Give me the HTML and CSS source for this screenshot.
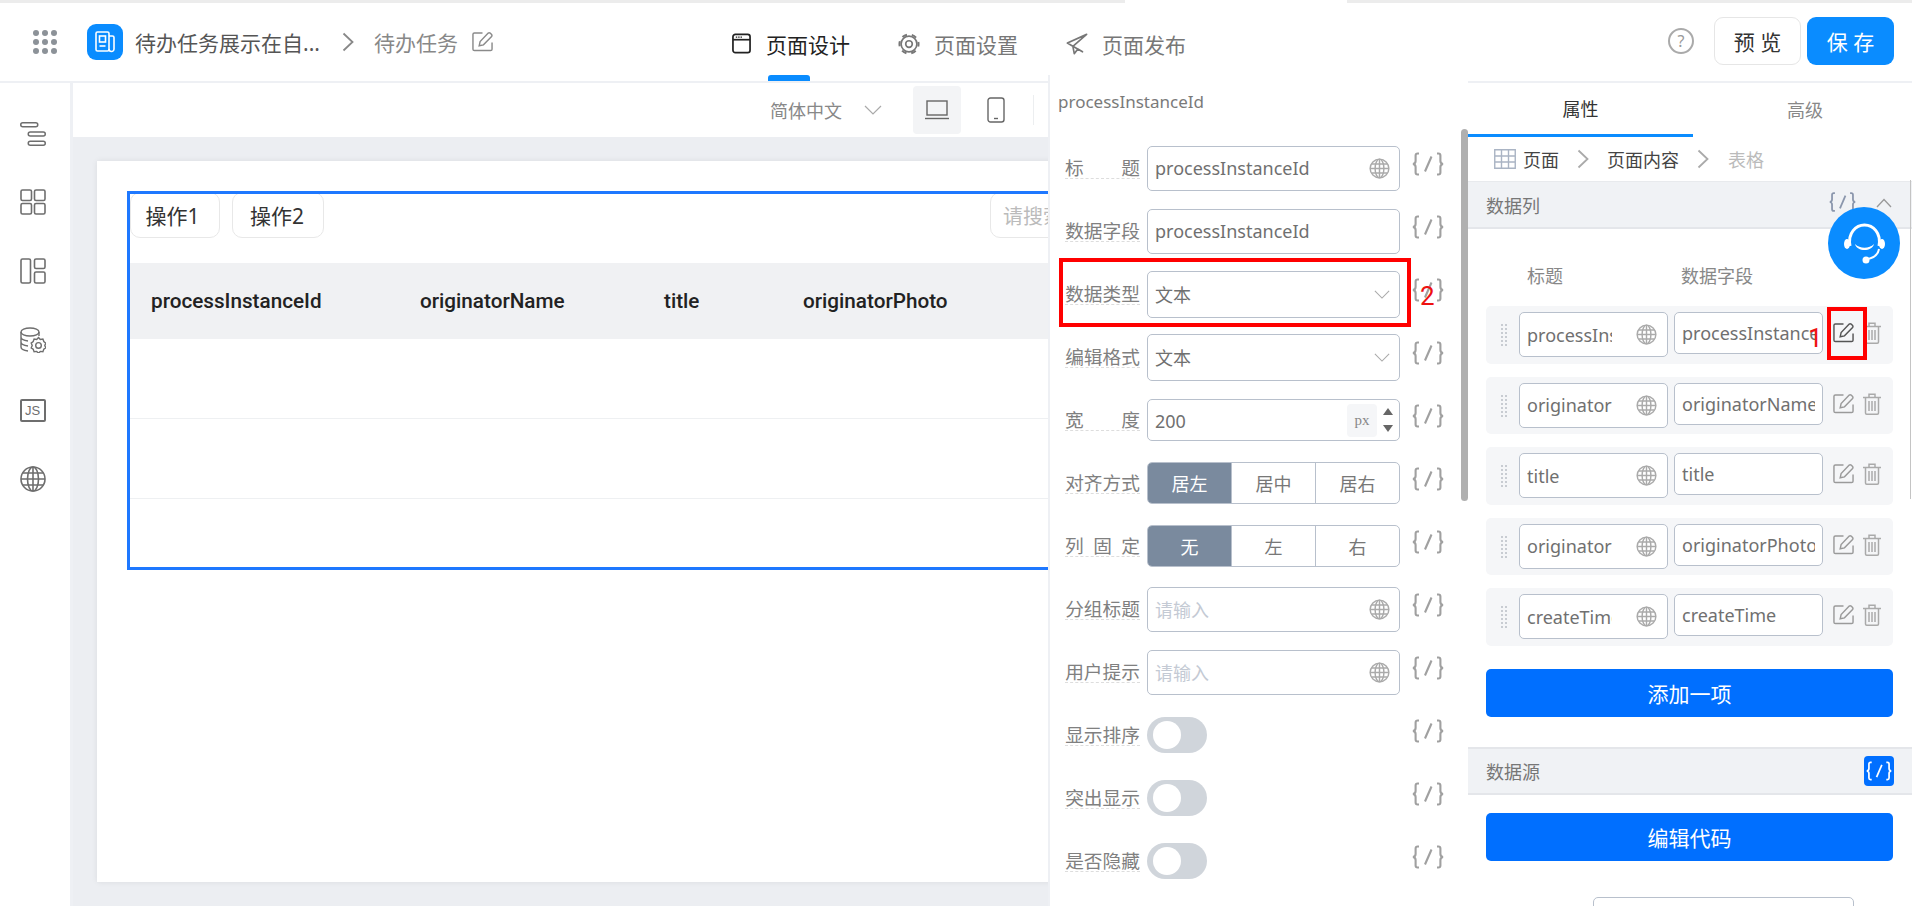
FILE: index.html
```html
<!DOCTYPE html>
<html lang="zh-CN">
<head>
<meta charset="utf-8">
<title>页面设计</title>
<link rel="stylesheet" href="styles.css">
</head>
<body>
<svg class="defs" aria-hidden="true">
  <symbol id="i-globe" viewBox="0 0 22 22"><g fill="none" stroke="currentColor" stroke-width="1.5"><circle cx="11" cy="11" r="9.8"/><ellipse cx="11" cy="11" rx="4.6" ry="9.8"/><path d="M11 1.2v19.6M1.2 11h19.6M2.6 6.2h16.8M2.6 15.8h16.8"/></g></symbol>
  <symbol id="i-fx" viewBox="0 0 32 24"><g fill="none" stroke="currentColor" stroke-width="2.1"><path d="M7 1.500H5.600Q3.600 1.500 3.600 3.500V9Q3.600 11.500 1 12Q3.600 12.500 3.600 15V20.500Q3.600 22.500 5.600 22.500H7"/><path d="M25 1.500H26.400Q28.400 1.500 28.400 3.500V9Q28.400 11.500 31 12Q28.400 12.500 28.400 15V20.500Q28.400 22.500 26.400 22.500H25"/><path d="M19.500 4.500L13 19.500"/></g></symbol>
  <symbol id="i-down" viewBox="0 0 18 10"><path d="M1 1l8 8 8-8" fill="none" stroke="currentColor" stroke-width="1.2"/></symbol>
  <symbol id="i-right" viewBox="0 0 12 20"><path d="M1.500 1.500L10.500 10L1.500 18.500" fill="none" stroke="currentColor" stroke-width="1.800"/></symbol>
  <symbol id="i-edit" viewBox="0 0 22 22"><g fill="none" stroke="currentColor" stroke-width="1.500"><path d="M11 2H2.500Q1 2 1 3.500V19Q1 20.500 2.500 20.500H19.500Q21 20.500 21 19V12"/><path d="M7.500 15.500L8.500 11L17 2.200Q18 1.300 19 2.200L20.500 3.700Q21.300 4.700 20.500 5.700L12 14.500Z"/></g></symbol>
  <symbol id="i-trash" viewBox="0 0 18 22"><g fill="none" stroke="currentColor" stroke-width="1.500"><path d="M0 4.500h18M6 4V1.200h6V4M2.500 4.500V20a1.200 1.200 0 0 0 1.200 1.200h10.600A1.200 1.200 0 0 0 15.500 20V4.500M6 8v10M9 8v10M12 8v10"/></g></symbol>
</svg>

<div class="strip"><span class="strip-a"></span><span class="strip-b"></span><span class="strip-c"></span></div>

<header class="topbar">
  <div class="dots"><i></i><i></i><i></i><i></i><i></i><i></i><i></i><i></i><i></i></div>
  <div class="applogo">
    <svg viewBox="0 0 24 24" width="24" height="24"><g fill="none" stroke="#fff" stroke-width="1.600"><rect x="3" y="2" width="13" height="19" rx="1.500"/><path d="M16 6h3.500a1.500 1.500 0 0 1 1.500 1.500V19a2.500 2.500 0 0 1-5 0"/><rect x="6.500" y="6" width="6" height="6"/><path d="M6.500 16h6"/></g></svg>
  </div>
  <span class="appname">待办任务展示在自...</span>
  <svg class="crumb-chev"><use href="#i-right"/></svg>
  <span class="pagename">待办任务</span>
  <svg class="page-edit"><use href="#i-edit"/></svg>

  <nav class="maintabs">
    <div class="maintab is-active">
      <svg viewBox="0 0 20 22" width="19" height="21"><rect x="1" y="1.500" width="18" height="19" rx="2.500" fill="none" stroke="#222" stroke-width="1.800"/><path d="M1 7h18" stroke="#222" stroke-width="1.800"/><path d="M4 4.300h7" stroke="#222" stroke-width="1.200" stroke-dasharray="1.500 1"/></svg>
      <span>页面设计</span>
    </div>
    <div class="maintab">
      <svg viewBox="0 0 24 24" width="22" height="22"><g fill="none" stroke="#777"><circle cx="12" cy="12" r="8.600" stroke-width="1.800"/><circle cx="12" cy="12" r="10.400" stroke-width="2.200" stroke-dasharray="5.500 5.400" stroke-dashoffset="2.700"/><circle cx="12" cy="12" r="3.600" stroke-width="1.800"/></g></svg>
      <span>页面设置</span>
    </div>
    <div class="maintab">
      <svg viewBox="0 0 24 24" width="22" height="22"><path d="M22.500 1.500L1.500 11l6 3.500L22.500 1.500zM7.500 14.500L9 22.500l4-5 5 3z" fill="none" stroke="#777" stroke-width="1.800" stroke-linejoin="round"/></svg>
      <span>页面发布</span>
    </div>
  </nav>

  <div class="topright">
    <span class="help">?</span>
    <span class="btn-preview">预 览</span>
    <span class="btn-save">保 存</span>
  </div>
</header>

<main class="workspace">
  <aside class="rail">
    <svg viewBox="0 0 26 24" width="26" height="24"><g fill="none" stroke="#6e6e6e" stroke-width="1.500"><rect x=".75" y=".75" width="17" height="4" rx="2"/><rect x="8.250" y="10" width="17" height="4" rx="2"/><rect x="8.250" y="19.250" width="17" height="4" rx="2"/></g></svg>
    <svg viewBox="0 0 26 26" width="26" height="26"><g fill="none" stroke="#6e6e6e" stroke-width="1.600"><rect x="1" y="1" width="10.500" height="10.500" rx="1.500"/><rect x="14.500" y="1" width="10.500" height="10.500" rx="1.500"/><rect x="1" y="14.500" width="10.500" height="10.500" rx="1.500"/><rect x="14.500" y="14.500" width="10.500" height="10.500" rx="1.500"/></g></svg>
    <svg viewBox="0 0 26 26" width="26" height="26"><g fill="none" stroke="#6e6e6e" stroke-width="1.600"><rect x="1" y="1" width="9.500" height="24" rx="1.500"/><rect x="14.500" y="1" width="10.500" height="9.500" rx="1.500"/><rect x="14.500" y="14" width="10.500" height="11" rx="1.500"/></g></svg>
    <svg viewBox="0 0 26 26" width="26" height="26"><g fill="none" stroke="#6e6e6e" stroke-width="1.400"><ellipse cx="10" cy="5" rx="9" ry="4"/><path d="M1 5v15c0 2 3 3.500 7 4M1 10c0 2 3 3.500 7 4M1 15c0 2 3 3.500 7 4M19 5v4"/><path d="M18.500 10.500l1.800 2 2.600-.4.900 2.500 2 1.500-1 2.400 1 2.400-2 1.400-.9 2.400-2.600-.3-1.800 1.800-1.800-1.800-2.600.3-.9-2.400-2-1.400 1-2.400-1-2.400 2-1.500.9-2.500 2.600.4z"/><circle cx="18.500" cy="18.400" r="2.800"/></g></svg>
    <div class="rail-js">JS</div>
    <svg class="rail-globe" viewBox="0 0 26 26" width="26" height="26"><g fill="none" stroke="#6e6e6e" stroke-width="1.600"><circle cx="13" cy="13" r="12"/><ellipse cx="13" cy="13" rx="5.500" ry="12"/><path d="M13 1v24M1 13h24M2.800 7h20.400M2.800 19h20.400"/></g></svg>
  </aside>

  <section class="canvas">
    <div class="canvas-tools">
      <span class="lang">简体中文</span>
      <svg class="lang-chev"><use href="#i-down"/></svg>
      <span class="device is-on"><svg viewBox="0 0 26 20" width="26" height="20"><g fill="none" stroke="#666" stroke-width="1.400"><rect x="3" y="1" width="20" height="14"/><path d="M1 18.500h24"/></g></svg></span>
      <span class="device"><svg viewBox="0 0 18 26" width="18" height="26"><g fill="none" stroke="#666" stroke-width="1.400"><rect x="1" y="1" width="16" height="24" rx="2.500"/><path d="M7 21.500h4"/></g></svg></span>
      <span class="tool-sep"></span>
    </div>
    <div class="page-sheet">
      <div class="tablebox">
        <div class="tablebar">
          <span class="opbtn">操作1</span>
          <span class="opbtn">操作2</span>
          <span class="searchbox">请搜索</span>
        </div>
        <div class="thead">
          <span>processInstanceId</span><span>originatorName</span><span>title</span><span>originatorPhoto</span>
        </div>
        <div class="trow"></div>
        <div class="trow"></div>
      </div>
    </div>
  </section>

  <aside class="props">
    <div class="props-tabs">
      <span class="props-tab is-active">属性</span>
      <span class="props-tab">高级</span>
    </div>
    <div class="props-crumb">
      <svg class="crumb-grid" viewBox="0 0 22 20" width="22" height="20"><path d="M.75.75h20.500v18.500H.75zM.75 7h20.500M.75 13h20.500M7.500.75v18.500M14.500.75v18.500" fill="none" stroke="#aab4c4" stroke-width="1.400"/></svg>
      <span>页面</span>
      <svg class="chev"><use href="#i-right"/></svg>
      <span>页面内容</span>
      <svg class="chev"><use href="#i-right"/></svg>
      <span class="crumb-last">表格</span>
    </div>
    <div class="sect sect-cols">
      <span>数据列</span>
      <svg class="fx fx-blue"><use href="#i-fx"/></svg>
      <svg class="sect-up" viewBox="0 0 16 10" width="16" height="10"><path d="M1 9l7-7.500L15 9" fill="none" stroke="#999" stroke-width="1.300"/></svg>
    </div>
    <div class="cols-head"><span>标题</span><span>数据字段</span></div>
    <div class="cols-list">
      <div class="colrow">
        <span class="grip"></span>
        <div class="cbox cbox-a"><span class="ctext">processInstanceId</span><svg class="globe"><use href="#i-globe"/></svg></div>
        <div class="cbox cbox-b"><span class="ctext">processInstanceId</span></div>
        <svg class="act-edit is-dark"><use href="#i-edit"/></svg>
        <svg class="act-trash"><use href="#i-trash"/></svg>
      </div>
      <div class="colrow">
        <span class="grip"></span>
        <div class="cbox cbox-a"><span class="ctext">originatorName</span><svg class="globe"><use href="#i-globe"/></svg></div>
        <div class="cbox cbox-b"><span class="ctext">originatorName</span></div>
        <svg class="act-edit"><use href="#i-edit"/></svg>
        <svg class="act-trash"><use href="#i-trash"/></svg>
      </div>
      <div class="colrow">
        <span class="grip"></span>
        <div class="cbox cbox-a"><span class="ctext">title</span><svg class="globe"><use href="#i-globe"/></svg></div>
        <div class="cbox cbox-b"><span class="ctext">title</span></div>
        <svg class="act-edit"><use href="#i-edit"/></svg>
        <svg class="act-trash"><use href="#i-trash"/></svg>
      </div>
      <div class="colrow">
        <span class="grip"></span>
        <div class="cbox cbox-a"><span class="ctext">originatorPhoto</span><svg class="globe"><use href="#i-globe"/></svg></div>
        <div class="cbox cbox-b"><span class="ctext">originatorPhoto</span></div>
        <svg class="act-edit"><use href="#i-edit"/></svg>
        <svg class="act-trash"><use href="#i-trash"/></svg>
      </div>
      <div class="colrow">
        <span class="grip"></span>
        <div class="cbox cbox-a"><span class="ctext">createTime</span><svg class="globe"><use href="#i-globe"/></svg></div>
        <div class="cbox cbox-b"><span class="ctext">createTime</span></div>
        <svg class="act-edit"><use href="#i-edit"/></svg>
        <svg class="act-trash"><use href="#i-trash"/></svg>
      </div>
    </div>
    <div class="bigbtn btn-add">添加一项</div>
    <div class="sect sect-src">
      <span>数据源</span>
      <span class="fx-on"><svg class="fx fx-white"><use href="#i-fx"/></svg></span>
    </div>
    <div class="bigbtn btn-code">编辑代码</div>
    <div class="stub-input"></div>
  </aside>
</main>

<section class="popover">
  <div class="pop-title">processInstanceId</div>
  <div class="frow">
    <label class="flabel spread"><span>标</span><span>题</span></label>
    <div class="fbox h45"><span class="ftext">processInstanceId</span><svg class="globe"><use href="#i-globe"/></svg></div>
    <svg class="fx"><use href="#i-fx"/></svg>
  </div>
  <div class="frow">
    <label class="flabel">数据字段</label>
    <div class="fbox h45"><span class="ftext">processInstanceId</span></div>
    <svg class="fx"><use href="#i-fx"/></svg>
  </div>
  <div class="frow">
    <label class="flabel">数据类型</label>
    <div class="fbox h47"><span class="ftext">文本</span><svg class="sel-chev"><use href="#i-down"/></svg></div>
    <svg class="fx"><use href="#i-fx"/></svg>
  </div>
  <div class="frow">
    <label class="flabel">编辑格式</label>
    <div class="fbox h47"><span class="ftext">文本</span><svg class="sel-chev"><use href="#i-down"/></svg></div>
    <svg class="fx"><use href="#i-fx"/></svg>
  </div>
  <div class="frow">
    <label class="flabel spread"><span>宽</span><span>度</span></label>
    <div class="fbox h42"><span class="ftext ftext-num">200</span><span class="unit">px</span><span class="spin"><i class="up"></i><i class="dn"></i></span></div>
    <svg class="fx"><use href="#i-fx"/></svg>
  </div>
  <div class="frow">
    <label class="flabel">对齐方式</label>
    <div class="seg"><span class="is-on">居左</span><span>居中</span><span>居右</span></div>
    <svg class="fx"><use href="#i-fx"/></svg>
  </div>
  <div class="frow">
    <label class="flabel spread"><span>列</span><span>固</span><span>定</span></label>
    <div class="seg"><span class="is-on">无</span><span>左</span><span>右</span></div>
    <svg class="fx"><use href="#i-fx"/></svg>
  </div>
  <div class="frow">
    <label class="flabel">分组标题</label>
    <div class="fbox h45"><span class="ftext is-ph">请输入</span><svg class="globe"><use href="#i-globe"/></svg></div>
    <svg class="fx"><use href="#i-fx"/></svg>
  </div>
  <div class="frow">
    <label class="flabel">用户提示</label>
    <div class="fbox h45"><span class="ftext is-ph">请输入</span><svg class="globe"><use href="#i-globe"/></svg></div>
    <svg class="fx"><use href="#i-fx"/></svg>
  </div>
  <div class="frow">
    <label class="flabel">显示排序</label>
    <div class="fslot"><span class="toggle"></span></div>
    <svg class="fx"><use href="#i-fx"/></svg>
  </div>
  <div class="frow">
    <label class="flabel">突出显示</label>
    <div class="fslot"><span class="toggle"></span></div>
    <svg class="fx"><use href="#i-fx"/></svg>
  </div>
  <div class="frow">
    <label class="flabel">是否隐藏</label>
    <div class="fslot"><span class="toggle"></span></div>
    <svg class="fx"><use href="#i-fx"/></svg>
  </div>
  <div class="pop-scroll"></div>
</section>

<div class="mark mark-type"></div>
<div class="mark mark-edit"></div>
<span class="marknum num-1">1</span>
<span class="marknum num-2">2</span>
<span class="props-line"></span>

<div class="helpdesk">
  <svg viewBox="0 0 48 48" width="48" height="48"><g fill="none" stroke="#fff"><path d="M10 27C7.500 14 16 6 24.500 6S41.500 14 39 27" stroke-width="3"/><path d="M39 30c-1 6-5 9-12 10" stroke-width="2"/></g><ellipse cx="7" cy="25" rx="3" ry="5" fill="#fff"/><ellipse cx="42" cy="25" rx="3" ry="5" fill="#fff"/><path d="M15 25c5 5 14 5 19 0-2 8-17 8-19 0z" fill="#fff"/><circle cx="26" cy="41" r="3.500" fill="#fff"/></svg>
</div>
</body>
</html>
```

FILE: styles.css
```css
* { box-sizing: border-box; }
html, body { margin: 0; height: 906px; overflow: hidden; }
body {
  position: relative;
  background: #fff;
  font-family: "Noto Sans", "Noto Sans CJK SC", sans-serif;
  color: #666;
}
.defs { position: absolute; width: 0; height: 0; }

.strip { display: flex; height: 3px; }
.strip-a { width: 1125px; background: #ececec; }
.strip-b { width: 222px; background: #fff; }
.strip-c { flex: 1; background: #ececec; }

/* top bar */
.topbar {
  display: flex;
  align-items: center;
  height: 80px;
  padding: 0 18px 1px 33px;
  border-bottom: 2px solid #eef0f4;
}
.dots { display: grid; grid-template-columns: repeat(3, 6px); gap: 3px; width: 24px; }
.dots i { width: 6px; height: 6px; border-radius: 50%; background: #8c9298; }
.applogo {
  display: flex; align-items: center; justify-content: center;
  width: 36px; height: 36px; margin-left: 30px; border-radius: 9px;
  background: #0a8cff;
}
.appname { margin-left: 12px; width: 184px; font-size: 21px; color: #555; white-space: nowrap; }
.crumb-chev { width: 12px; height: 20px; margin-left: 23px; color: #888; }
.pagename { margin-left: 20px; font-size: 21px; color: #888; }
.page-edit { width: 21px; height: 21px; margin-left: 14px; color: #8a8a8a; }
.maintabs { display: flex; align-items: center; margin-left: 239px; margin-top: 4px; gap: 48px; }
.maintab { position: relative; display: flex; align-items: center; gap: 14px; font-size: 21px; color: #777; }
.maintab.is-active { color: #222; gap: 15px; }
.maintab.is-active::after {
  content: ""; position: absolute; left: 36px; top: 46.500px;
  width: 42px; height: 6px; border-radius: 3px 3px 0 0; background: #0a8cff;
}
.topright { display: flex; align-items: center; margin-left: auto; margin-top: -2px; }
.help {
  display: flex; align-items: center; justify-content: center;
  width: 26px; height: 26px; margin-right: 20px;
  border: 2px solid #aaa; border-radius: 50%;
  font-size: 16px; color: #999;
}
.btn-preview, .btn-save {
  display: flex; align-items: center; justify-content: center;
  width: 87px; height: 48px; border-radius: 9px; font-size: 21px;
}
.btn-preview { border: 1px solid #e6e6e6; color: #333; margin-right: 6px; }
.btn-save { background: #0a8cff; color: #fff; }

/* workspace */
.workspace { display: flex; height: 823px; }
.rail {
  display: flex; flex-direction: column; align-items: center; gap: 43px;
  width: 73px; padding: 39px 5px 0 0;
  border-right: 3px solid #eef0f4; flex: none;
}
.rail svg { flex: none; }
.rail-js {
  display: flex; align-items: center; justify-content: center;
  width: 26px; height: 23px; margin-top: 3px;
  border: 2px solid #6e6e6e; border-radius: 2px;
  font: 13px "Liberation Sans", sans-serif; color: #6e6e6e;
}
.rail-globe { margin-top: 1px; }

.canvas { flex: 1; min-width: 0; background: #eceef2; overflow: hidden; }
.canvas-tools {
  display: flex; align-items: center; height: 54px;
  padding-left: 697px; background: #fff;
}
.lang { font-size: 18px; color: #888; }
.lang-chev { width: 18px; height: 10px; margin-left: 22px; color: #aaa; }
.device {
  display: flex; align-items: center; justify-content: center;
  width: 48px; height: 48px; border-radius: 4px;
}
.device.is-on { margin-left: 31px; background: #f3f4f6; }
.device + .device { margin-left: 11px; }
.tool-sep { width: 1px; height: 30px; margin-left: 13px; background: #eceef0; }

.page-sheet {
  height: 721px; margin: 24px 24px 0;
  padding: 30px 0 0 30px;
  background: #fff; box-shadow: 0 0 6px rgba(0,0,0,.08);
}
.tablebox { height: 379px; border: 3px solid #1e78ff; overflow: hidden; }
.tablebar { display: flex; gap: 12px; height: 69px; }
.opbtn {
  display: flex; align-items: center; justify-content: center;
  width: 92px; height: 46px; margin-top: -2px; padding-right: 2px;
  border: 1px solid #e8e8e8; border-radius: 10px;
  font-size: 21px; color: #333;
}
.opbtn:first-child { width: 90px; padding-right: 5px; }
.searchbox {
  display: flex; align-items: center;
  width: 200px; height: 46px; margin: -2px 0 0 654px; padding-left: 12px;
  border: 1px solid #e8e8e8; border-radius: 10px;
  font-size: 20px; color: #bbb;
}
.thead {
  display: grid; grid-template-columns: 269px 244px 139px 300px;
  align-items: center; height: 76px; padding-left: 21px;
  background: #f0f1f3;
  font: 500 20.700px Roboto, sans-serif; color: #222;
}
.trow { height: 80px; border-bottom: 1px solid #eef0f2; }

/* right panel */
.props { position: relative; flex: none; width: 444px; height: 823px; overflow: hidden; background: #fff; }
.props-tabs { display: flex; height: 54px; }
.props-tab { flex: 1; display: flex; align-items: center; justify-content: center; font-size: 18px; color: #888; padding: 0 0 2px 5px; }
.props-tab.is-active { flex: none; width: 225px; color: #333; border-bottom: 3px solid #0a8cff; padding-left: 0; }
.props-crumb { display: flex; align-items: center; height: 44px; padding-left: 26px; font-size: 18px; color: #444; }
.crumb-grid { margin-right: 7px; }
.chev { width: 12px; height: 20px; margin: 0 18px; color: #aaa; }
.crumb-last { color: #bbb; margin-left: 1px; }
.sect {
  display: flex; align-items: center; padding: 0 18px;
  background: #f0f2f5; font-size: 18px; color: #777;
}
.sect-cols { height: 48px; border-top: 1px solid #e8eaed; border-bottom: 2px solid #e4e6ea; }
.sect-up { margin-left: 20px; margin-right: 2px; margin-top: -4px; }
.fx { flex: none; width: 32px; height: 24px; color: #a0a0a0; margin-bottom: 9px; }
.fx-blue { margin: -6px 0 0 auto; width: 27px; height: 24px; color: #8a96ac; }
.fx-on { display: flex; align-items: center; justify-content: center; width: 30px; height: 30px; margin-left: auto; border-radius: 4px; background: #006fff; }
.fx-white { margin: 0; width: 26px; height: 22px; color: #fff; }
.cols-head { display: flex; height: 77px; padding: 36px 0 0 59px; font-size: 18px; color: #888; line-height: 22px; }
.cols-head span:last-child { margin-left: 118px; }
.cols-list { display: flex; flex-direction: column; gap: 13px; margin: 0 19px 0 18px; }
.colrow {
  display: flex; align-items: flex-start; height: 57.5px;
  padding: 6px 0 0 14px; border-radius: 5px; background: #f5f6f8;
}
.grip {
  width: 8px; height: 24px; margin-top: 11px; margin-right: 11px;
  background-image: radial-gradient(circle, #c8ccd2 1px, transparent 1.2px);
  background-size: 4px 4px;
}
.cbox {
  display: flex; align-items: center; flex: none;
  border: 1px solid #b8c0cc; border-radius: 5px; background: #fff;
  font-size: 18px; color: #707070;
}
.cbox-a { width: 149px; height: 45px; padding-left: 7px; }
.cbox-b { width: 149px; height: 42px; margin-left: 6px; padding-left: 7px; }
.cbox-a .ctext { width: 85px; }
.cbox-b .ctext { width: 133px; }
.ctext { overflow: hidden; white-space: nowrap; }
.cbox .globe { margin-left: 24px; }
.globe { flex: none; width: 21px; height: 21px; color: #aaa; }
.act-edit { flex: none; width: 21px; height: 21px; margin: 10px 0 0 10px; color: #9a9a9a; }
.act-edit.is-dark { color: #555; }
.act-trash { flex: none; width: 18px; height: 22px; margin: 10px 0 0 9px; color: #aaa; }
.bigbtn {
  display: flex; align-items: center; justify-content: center;
  height: 48px; margin: 0 19px 0 18px; border-radius: 5px;
  background: #006fff; color: #fff; font-size: 21px;
}
.btn-add { margin-top: 23px; }
.sect-src { height: 48px; margin-top: 30px; border-top: 2px solid #e4e6ea; border-bottom: 2px solid #e4e6ea; }
.btn-code { margin-top: 18px; }
.stub-input { height: 45px; width: 261px; margin: 36px 0 0 125px; border: 1px solid #b8c0cc; border-radius: 5px; }

/* floating config popover */
.popover {
  position: absolute; left: 1048px; top: 75px; width: 420px; height: 831px;
  padding-left: 14px; background: #fff; border-left: 2px solid #eef0f4;
}
.pop-title { height: 61.5px; padding-top: 14px; margin-left: -6px; font-size: 17px; line-height: 26px; color: #7a7a7a; }
.frow { display: flex; align-items: center; height: 63px; padding-left: 1px; }
.flabel {
  display: flex; justify-content: center; flex: none;
  width: 75px; height: 21px; margin-right: 7px;
  border-bottom: 1px dashed #ddd;
  font-size: 18.7px; line-height: 20px; color: #808080; white-space: nowrap;
}
.flabel.spread { justify-content: space-between; }
.fbox {
  display: flex; align-items: center; flex: none;
  width: 253px; margin-right: 12px; padding: 0 9px 0 7px;
  border: 1px solid #b8c0cc; border-radius: 5px;
  font-size: 18px; color: #707070;
}
.h45 { height: 45px; }
.h47 { height: 47px; }
.h42 { height: 42px; }
.ftext { flex: 1; white-space: nowrap; }
.ftext.is-ph { color: #c4cad4; }
.ftext-num { padding-top: 2px; }
.sel-chev { flex: none; width: 16px; height: 9px; color: #aaa; }
.unit {
  display: flex; align-items: center; justify-content: center;
  width: 30px; height: 33px; border-radius: 4px;
  background: #f5f6f8; font: 15px "Liberation Serif", serif; color: #888;
}
.spin { display: flex; flex-direction: column; gap: 10px; margin-left: 6px; margin-right: -3px; }
.spin i { display: block; width: 0; height: 0; border-left: 5px solid transparent; border-right: 5px solid transparent; }
.spin .up { border-bottom: 7px solid #666; }
.spin .dn { border-top: 7px solid #666; }
.seg {
  display: flex; flex: none; width: 253px; height: 42px; margin-right: 12px;
  border: 1px solid #b8c0cc; border-radius: 5px; overflow: hidden;
  font-size: 18px; color: #777;
}
.seg span { flex: 1; display: flex; align-items: center; justify-content: center; border-left: 1px solid #b8c0cc; }
.seg .is-on { flex: none; width: 83px; background: #7a8a9e; color: #fff; border-left: 0; }
.fslot { flex: none; width: 253px; margin-right: 12px; display: flex; }
.toggle { position: relative; width: 60px; height: 36px; border-radius: 18px; background: #d0d5db; }
.toggle::after { content: ""; position: absolute; left: 6px; top: 4px; width: 28px; height: 28px; border-radius: 50%; background: #fff; }
.pop-scroll { position: absolute; right: 0; top: 54px; width: 7px; height: 372px; border-radius: 4px; background: #b0b0b0; }

/* annotations drawn on the screenshot */
.mark { position: absolute; border: 4px solid #f00; }
.mark-type { left: 1059px; top: 258px; width: 352px; height: 69px; }
.mark-edit { left: 1827px; top: 307px; width: 40px; height: 53px; }
.marknum { position: absolute; font: 26px/30px Roboto, sans-serif; color: #e11; }
.num-1 { left: 1808px; top: 323px; }
.num-2 { left: 1420px; top: 281px; }
.props-line { position: absolute; left: 1910px; top: 180px; width: 1px; height: 319px; background: #c4c4c4; }

.helpdesk {
  position: absolute; left: 1828px; top: 207px;
  display: flex; align-items: center; justify-content: center;
  width: 72px; height: 72px; border-radius: 50%; background: #0a8cff;
}
```
